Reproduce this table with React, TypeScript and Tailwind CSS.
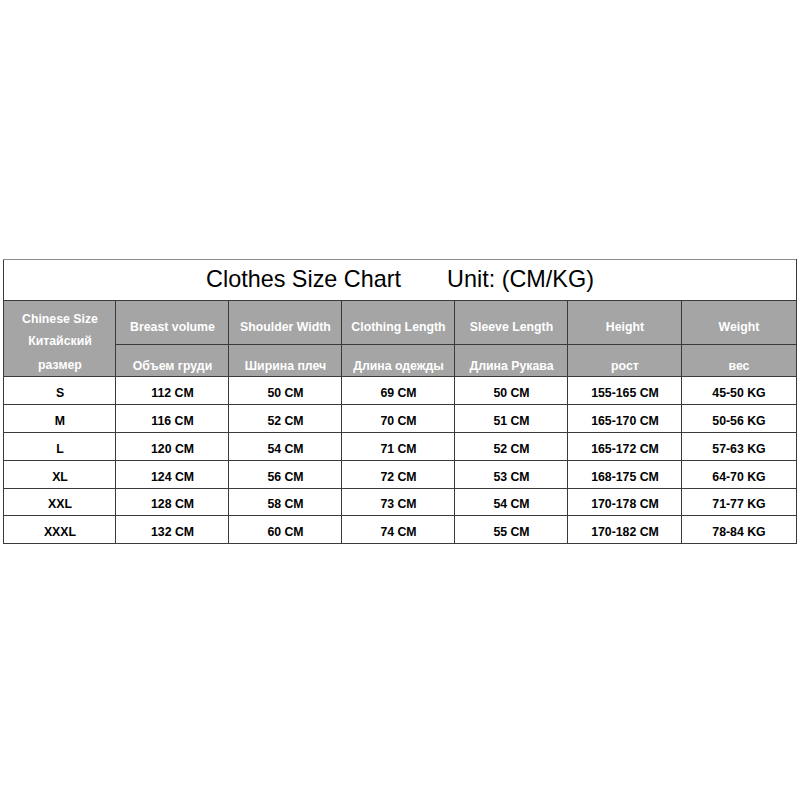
const headers = [
  ["Breast volume", "Объем груди"],
  ["Shoulder Width", "Ширина плеч"],
  ["Clothing Length", "Длина одежды"],
  ["Sleeve Length", "Длина Рукава"],
  ["Height", "рост"],
  ["Weight", "вес"],
];

const rows = [
  ["S", "112 CM", "50 CM", "69 CM", "50 CM", "155-165 CM", "45-50 KG"],
  ["M", "116 CM", "52 CM", "70 CM", "51 CM", "165-170 CM", "50-56 KG"],
  ["L", "120 CM", "54 CM", "71 CM", "52 CM", "165-172 CM", "57-63 KG"],
  ["XL", "124 CM", "56 CM", "72 CM", "53 CM", "168-175 CM", "64-70 KG"],
  ["XXL", "128 CM", "58 CM", "73 CM", "54 CM", "170-178 CM", "71-77 KG"],
  ["XXXL", "132 CM", "60 CM", "74 CM", "55 CM", "170-182 CM", "78-84 KG"],
];

const widths = ["w-[112px]", "w-[113px]", "w-[113px]", "w-[113px]", "w-[113px]", "w-[114px]", "w-[114px]"];

export default function App() {
  return (
    <div className="h-[800px] w-[800px] bg-white pt-[259px] font-['Liberation_Sans',Arial,sans-serif]">
      <table className="mx-auto table-fixed border-collapse w-[792px] border border-[#3a3a3a]">
        <colgroup>
          {widths.map((w, i) => (
            <col key={i} className={w} />
          ))}
        </colgroup>
        <tbody>
          <tr className="h-[41px]">
            <td
              colSpan={7}
              className="border border-[#3a3a3a] border-t-[#8c8c8c] bg-white text-center align-middle text-[23.4px] text-black"
            >
              <span>Clothes Size Chart</span>
              <span className="ml-[46px]">Unit: (CM/KG)</span>
            </td>
          </tr>
          <tr className="h-[43px] bg-[#a5a5a5]">
            <td
              rowSpan={2}
              className="border border-[#3a3a3a] align-top pt-[7px] text-center text-white font-bold text-[12.3px] leading-[22px]"
            >
              <div>Chinese Size</div>
              <div>Китайский</div>
              <div className="pt-[2px]">размер</div>
            </td>
            {headers.map(([en]) => (
              <td
                key={en}
                className="border border-[#3a3a3a] align-middle pt-[10px] text-center text-white font-bold text-[12.3px] whitespace-nowrap"
              >
                {en}
              </td>
            ))}
          </tr>
          <tr className="h-[31px] bg-[#a5a5a5]">
            {headers.map(([en, ru]) => (
              <td
                key={en}
                className="border border-[#3a3a3a] align-middle pt-[11px] text-center text-white font-bold text-[12.3px] leading-[20px] whitespace-nowrap"
              >
                {ru}
              </td>
            ))}
          </tr>
          {rows.map((r, ri) => (
            <tr key={r[0]} className={ri === 4 ? "h-[27px]" : "h-[28px]"}>
              {r.map((c, i) => (
                <td
                  key={i}
                  className="border border-[#3a3a3a] align-middle pt-[4px] text-center text-black font-bold text-[12.3px] leading-[18px] whitespace-nowrap"
                >
                  {c}
                </td>
              ))}
            </tr>
          ))}
        </tbody>
      </table>
    </div>
  );
}
